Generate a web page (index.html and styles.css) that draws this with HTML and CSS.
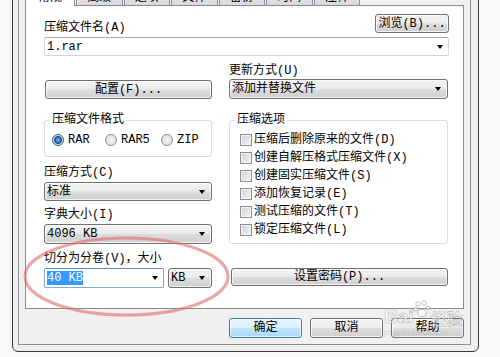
FILE: index.html
```html
<!DOCTYPE html>
<html lang="zh-CN">
<head>
    <meta charset="UTF-8">
    <title>压缩文件名和参数</title>
    <link rel="stylesheet" href="styles.css">
</head>
<body>
<div class="window">
    <div class="client">
        <div class="tabs">
            <span class="tab active">常规</span>
            <span class="tab">高级</span>
            <span class="tab">选项</span>
            <span class="tab">文件</span>
            <span class="tab">备份</span>
            <span class="tab">时间</span>
            <span class="tab">注释</span>
        </div>
        <div class="panel">
            <div class="name_row">
                <span class="label">压缩文件名(A)</span>
                <span class="btn browse">浏览(B)...</span>
            </div>
            <div class="combo edit name_box"><span>1.rar</span><i class="arrow"></i></div>

            <div class="cols">
                <div class="cell bottom">
                    <span class="btn config">配置(F)...</span>
                </div>
                <div class="cell">
                    <div class="label">更新方式(U)</div>
                    <div class="combo list update">添加并替换文件<i class="arrow"></i></div>
                </div>

                <div class="cell row_b">
                    <fieldset class="group format">
                        <legend>压缩文件格式</legend>
                        <div class="opts_row">
                            <label class="opt first"><span class="radio on"></span>RAR</label>
                            <label class="opt second"><span class="radio"></span>RAR5</label>
                            <label class="opt"><span class="radio"></span>ZIP</label>
                        </div>
                    </fieldset>
                    <div class="label method_label">压缩方式(C)</div>
                    <div class="combo list small_gap">标准<i class="arrow"></i></div>
                    <div class="label dict_label">字典大小(I)</div>
                    <div class="combo list small_gap tall">4096 KB<i class="arrow"></i></div>
                </div>
                <div class="cell row_b">
                    <fieldset class="group options">
                        <legend>压缩选项</legend>
                        <div class="check"><span class="box"></span>压缩后删除原来的文件(D)</div>
                        <div class="check"><span class="box"></span>创建自解压格式压缩文件(X)</div>
                        <div class="check"><span class="box"></span>创建固实压缩文件(S)</div>
                        <div class="check"><span class="box"></span>添加恢复记录(E)</div>
                        <div class="check"><span class="box"></span>测试压缩的文件(T)</div>
                        <div class="check"><span class="box"></span>锁定压缩文件(L)</div>
                    </fieldset>
                </div>

                <div class="cell row_c">
                    <div class="label">切分为分卷(V)，大小</div>
                    <div class="split">
                        <div class="combo edit focus"><span class="sel">40 KB</span><i class="arrow"></i></div>
                        <div class="combo list unit">KB<i class="arrow"></i></div>
                    </div>
                </div>
                <div class="cell bottom">
                    <span class="btn password">设置密码(P)...</span>
                </div>
            </div>
        </div>
        <div class="actions">
            <span class="btn default">确定</span>
            <span class="btn">取消</span>
            <span class="btn">帮助</span>
        </div>
    </div>
</div>

<svg class="ring" width="215" height="88" viewBox="0 0 215 88">
    <ellipse cx="106.5" cy="43.5" rx="101.5" ry="38.5" fill="none" stroke="#e06a6a" stroke-opacity="0.6" stroke-width="3"/>
</svg>

<div class="watermark">
    <span class="wm_bai">Bai</span>
    <svg class="wm_paw" width="18" height="18" viewBox="0 0 18 18">
        <g fill="rgba(255,255,255,0.6)" stroke="rgba(120,120,120,0.45)" stroke-width="1">
            <circle cx="5" cy="4" r="2.2"/>
            <circle cx="11" cy="3" r="2.2"/>
            <circle cx="2.5" cy="9" r="2"/>
            <circle cx="15" cy="8" r="2"/>
            <ellipse cx="9" cy="13" rx="4.5" ry="3.8"/>
        </g>
    </svg>
    <span class="wm_cn">经验</span>
    <div class="wm_url">jingyan.baidu.com</div>
</div>
</body>
</html>
```

FILE: styles.css
```css
*{
    margin: 0;
    padding: 0;
    box-sizing: border-box;
}
body{
    position: relative;
    height: 357px;
    overflow: hidden;
    background-color: #f8f8f8;
    color: #000;
    font: 12px/14px "Liberation Mono", "Noto Sans CJK SC", monospace;
}

/* window frame */
.window{
    width: 467px;
    margin: -29px 0 0 12px;
    padding: 5px 7px 6px 5px;
    border: 1px solid #3a3a3a;
    border-radius: 0 0 6px 6px;
    background-color: #eeeff0;
}
.client{
    padding: 6px;
    border: 1px solid #8e8e8e;
    background-color: #f0f0f0;
}

/* tabs */
.tabs{
    display: flex;
    align-items: flex-end;
    height: 22px;
    border-bottom: 1px solid #898c95;
}
.tab{
    width: 46.5px;
    height: 19px;
    margin-left: 1px;
    padding-top: 4px;
    border: 1px solid #898c95;
    border-bottom: none;
    border-radius: 2px 2px 0 0;
    background: linear-gradient(#f2f2f2, #e6e6e6 50%, #d9d9d9);
    text-align: center;
}
.tab.active{
    width: 50px;
    height: 22px;
    margin: 0 0 -1px 0;
    padding-top: 6px;
    background: #fff;
}

.panel{
    height: 303px;
    padding: 8px 14px 0 18px;
    border: 1px solid #898c95;
    border-top: none;
    background-color: #fff;
}

.name_row{
    display: flex;
    justify-content: space-between;
    align-items: flex-end;
}
.name_row .label{
    margin-bottom: -2px;
}

/* buttons */
.btn{
    display: flex;
    align-items: center;
    justify-content: center;
    height: 19px;
    border: 1px solid #707070;
    border-radius: 3px;
    background: linear-gradient(#f3f3f3, #ebebeb 48%, #dddddd 52%, #cfcfcf);
    box-shadow: inset 0 0 0 1px rgba(255, 255, 255, 0.75);
    white-space: nowrap;
}
.browse{
    width: 74px;
}
.config{
    width: 167px;
    margin-left: 1px;
}
.password{
    width: 217px;
    height: 18px;
    margin: 0 0 2px 2px;
}
.btn.default{
    border-color: #3c7fb1;
    background: linear-gradient(#eaf6fd, #d9f0fc 48%, #bee6fd 52%, #a7d9f5);
    box-shadow: inset 0 0 0 1px rgba(255, 255, 255, 0.6);
}

/* combo boxes */
.combo{
    display: flex;
    align-items: center;
    justify-content: space-between;
    height: 19px;
    padding: 0 5px 0 2px;
    white-space: nowrap;
}
.combo.edit{
    border: 1px solid #d2d6dc;
    border-top-color: #abadb3;
    border-radius: 2px;
    background-color: #fff;
}
.combo.list{
    border: 1px solid #707070;
    border-radius: 3px;
    background: linear-gradient(#f3f3f3, #ebebeb 48%, #dddddd 52%, #cfcfcf);
    box-shadow: inset 0 0 0 1px rgba(255, 255, 255, 0.75);
    padding-right: 6px;
}
.combo.focus{
    border-color: #7eaad6;
    border-top-color: #5d8fc4;
}
.arrow{
    width: 0;
    height: 0;
    border-left: 3.5px solid transparent;
    border-right: 3.5px solid transparent;
    border-top: 4px solid #000;
}
.name_box{
    margin-top: 4px;
}
.update{
    height: 20px;
    margin-top: 1px;
}
.sel{
    background-color: #3399ff;
    color: #fff;
}

/* two columns */
.cols{
    display: grid;
    grid-template-columns: 168px 219px;
    column-gap: 17px;
    margin-top: 8px;
}
.cell.bottom{
    align-self: end;
}
.row_b{
    margin-top: 14px;
}
.row_c{
    margin-top: 8px;
}

.group{
    border: 1px solid #d5dfe5;
    border-radius: 3px;
}
.group legend{
    padding: 0 2px;
    line-height: 14px;
}
.format{
    padding: 6px 5px 9px;
}
.options{
    padding: 4px 5px 4px;
}

.opts_row{
    display: flex;
    height: 14px;
}
.opt{
    display: flex;
    align-items: center;
    gap: 4px;
    padding-left: 2px;
    white-space: nowrap;
}
.opt.first{
    width: 53px;
}
.opt.second{
    width: 56px;
}
.radio{
    width: 12px;
    height: 12px;
    border: 1px solid #8f8f8f;
    border-radius: 50%;
    background: radial-gradient(circle, #f4f4f4, #d8d8d8);
}
.radio.on{
    border-color: #2c628b;
    background: radial-gradient(circle, #7cc3f5 0, #2a72b5 2.5px, #1b4f86 3.5px, #e6e6e6 4.5px, #d4d4d4 6px);
}

.check{
    display: flex;
    align-items: center;
    gap: 2px;
    height: 18px;
    padding-left: 5px;
    white-space: nowrap;
}
.box{
    width: 12px;
    height: 12px;
    border: 1px solid #8e8f8f;
    background: linear-gradient(135deg, #cfd2d6, #f5f5f5);
    box-shadow: inset 0 0 0 1px #f4f4f4;
}

.method_label{
    margin-top: 9px;
}
.dict_label{
    margin-top: 7px;
}
.small_gap{
    margin-top: 2px;
}
.combo.tall{
    height: 20px;
}

.split{
    display: flex;
    gap: 4px;
    margin-top: 2px;
}
.split .combo{
    height: 20px;
}
.split .focus{
    width: 120px;
}
.split .unit{
    width: 44px;
}

/* dialog buttons */
.actions{
    display: flex;
    justify-content: flex-end;
    gap: 8px;
    margin-top: 9px;
}
.actions .btn{
    width: 73px;
    height: 20px;
}

/* red mark drawn over the screenshot */
.ring{
    position: absolute;
    left: 20px;
    top: 233px;
}

/* watermark */
.watermark{
    position: absolute;
    left: 384px;
    top: 300px;
    display: flex;
    flex-wrap: wrap;
    align-items: flex-end;
    width: 90px;
    color: rgba(255, 255, 255, 0.6);
    -webkit-text-stroke: 0.6px rgba(120, 120, 120, 0.5);
}
.wm_bai{
    font: bold 19px/22px "Liberation Sans", sans-serif;
}
.wm_paw{
    margin: 0 0 10px -1px;
}
.wm_cn{
    font: bold 16px/20px "Noto Sans CJK SC", sans-serif;
}
.wm_url{
    width: 100%;
    font: 8px/10px "Liberation Sans", sans-serif;
    color: rgba(150, 150, 150, 0.35);
    -webkit-text-stroke: 0;
}
```
